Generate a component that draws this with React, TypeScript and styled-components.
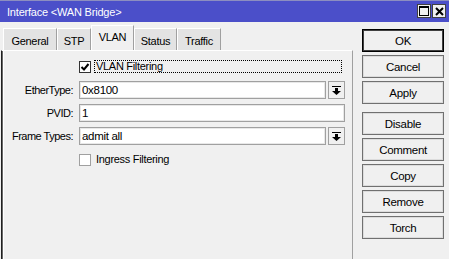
import React from "react";
import styled, { createGlobalStyle } from "styled-components";

const Global = createGlobalStyle`
  html, body { margin: 0; padding: 0; background: #f0f0f0; }
  body { font-family: "Liberation Sans", Arial, sans-serif; font-size: 11px; letter-spacing: -0.3px; color: #000; }
  * { box-sizing: border-box; }
`;

const Window = styled.div`
  width: 449px;
  height: 259px;
  overflow: hidden;
  background: #f0f0f0;
  display: flex;
  flex-direction: column;
`;

const TitleBar = styled.div`
  height: 22px;
  flex: none;
  background: #4b4fc9;
  border-top: 1px solid #8c8ec0;
  display: flex;
  align-items: center;
  padding: 0 3px 0 7px;
  color: #fff;
  font-size: 11px;
  letter-spacing: -0.2px;
`;

const TitleText = styled.span`
  flex: 1;
`;

const TitleControls = styled.div`
  display: flex;
  gap: 1px;
  margin-top: -1px;
`;

const TitleButton = styled.div`
  width: 14px;
  height: 14px;
  background: #f0f0f0;
  border: 1px solid #404040;
  display: flex;
  align-items: center;
  justify-content: center;
`;

const Body = styled.div`
  flex: 1;
  display: flex;
  min-height: 0;
`;

const LeftArea = styled.div`
  width: 353px;
  flex: none;
  padding: 3px 0 0 3px;
  display: flex;
  flex-direction: column;
`;

const TabRow = styled.div`
  display: flex;
  align-items: flex-end;
  height: 25px;
  flex: none;
`;

const Tab = styled.div<{ $w: number; $active?: boolean }>`
  width: ${(p) => p.$w}px;
  height: ${(p) => (p.$active ? 25 : 22)}px;
  background: ${(p) => (p.$active ? "#f0f0f0" : "#e3e3e3")};
  border-top: 1px solid #ffffff;
  border-left: 1px solid #ffffff;
  border-right: 1px solid #a0a0a0;
  display: flex;
  align-items: center;
  justify-content: center;
  padding-top: ${(p) => (p.$active ? 0 : 2)}px;
  padding-bottom: ${(p) => (p.$active ? 2 : 0)}px;
`;

const Panel = styled.div`
  flex: 1;
  margin-left: -2px;
  border-top: 1px solid #ffffff;
  border-left: 1px solid #202020;
  border-right: 1px solid #a0a0a0;
  box-shadow: inset 1px 0 0 #696969, inset 2px 0 0 #ffffff;
  padding: 9px 7px 0 2px;
  display: flex;
  flex-direction: column;
`;

const CheckRow = styled.div<{ $mt?: number }>`
  display: flex;
  align-items: center;
  height: 13px;
  margin-top: ${(p) => p.$mt ?? 0}px;
  padding-left: 75px;
`;

const Box = styled.div<{ $focus?: boolean }>`
  width: 12px;
  height: 12px;
  background: #fff;
  border: 1px solid ${(p) => (p.$focus ? "#333" : "#a0a0a0")};
  display: flex;
  align-items: center;
  justify-content: center;
  flex: none;
`;

const CheckLabel = styled.div<{ $focus?: boolean }>`
  margin-left: 3px;
  height: 13px;
  line-height: 11px;
  padding-left: 1px;
  flex: ${(p) => (p.$focus ? 1 : "none")};
  border: 1px dotted ${(p) => (p.$focus ? "#000" : "transparent")};
  margin-right: 3px;
`;

const Form = styled.div`
  display: grid;
  grid-template-columns: 69px 1fr;
  column-gap: 6px;
  row-gap: 5px;
  margin-top: 8px;
  align-items: center;
`;

const Label = styled.div`
  text-align: right;
  letter-spacing: -0.5px;
`;

const Field = styled.div`
  display: flex;
  gap: 2px;
  height: 18px;
`;

const Input = styled.div`
  flex: 1;
  height: 18px;
  background: #fff;
  border: 1px solid #a0a0a0;
  box-shadow: inset 0 0 0 1px #e8e8e8;
  padding: 0 2px;
  line-height: 16px;
  font-size: 11.5px;
`;

const DropButton = styled.div`
  width: 17px;
  height: 18px;
  flex: none;
  background: #f0f0f0;
  border: 1px solid #a0a0a0;
  display: flex;
  align-items: center;
  justify-content: center;
`;

const ButtonColumn = styled.div`
  width: 82px;
  margin-left: 9px;
  padding-top: 7px;
  display: flex;
  flex-direction: column;
  gap: 3px;
`;

const Button = styled.div<{ $default?: boolean; $mt?: number }>`
  height: 23px;
  background: #f0f0f0;
  border: 1px solid ${(p) => (p.$default ? "#000" : "#707070")};
  box-shadow: inset 0 0 0 1px ${(p) => (p.$default ? "#404040" : "#dcdcdc")};
  display: flex;
  align-items: center;
  justify-content: center;
  margin-top: ${(p) => p.$mt ?? 0}px;
  font-size: 11.5px;
`;

const DropIcon = () => (
  <svg width="9" height="9" viewBox="0 0 9 9">
    <rect x="0" y="0" width="9" height="1" fill="#000" />
    <rect x="3" y="2" width="3" height="3" fill="#000" />
    <polygon points="0,5 9,5 4.5,9" fill="#000" />
  </svg>
);

const Check = () => (
  <svg width="10" height="10" viewBox="0 0 10 10">
    <polyline points="1.5,5 4,7.5 8.5,2" fill="none" stroke="#000" strokeWidth="2" />
  </svg>
);

export default function App() {
  const tabs = [
    { name: "General", w: 54 },
    { name: "STP", w: 34 },
    { name: "VLAN", w: 43, active: true },
    { name: "Status", w: 43 },
    { name: "Traffic", w: 44 },
  ];
  return (
    <>
      <Global />
      <Window>
        <TitleBar>
          <TitleText>Interface &lt;WAN Bridge&gt;</TitleText>
          <TitleControls>
            <TitleButton>
              <svg width="10" height="10" viewBox="0 0 10 10">
                <rect x="0.5" y="0.5" width="9" height="9" fill="none" stroke="#000" />
                <rect x="0" y="0" width="10" height="2" fill="#000" />
              </svg>
            </TitleButton>
            <TitleButton>
              <svg width="9" height="9" viewBox="0 0 9 9">
                <path d="M1 1 L8 8 M8 1 L1 8" stroke="#000" strokeWidth="2" />
              </svg>
            </TitleButton>
          </TitleControls>
        </TitleBar>
        <Body>
          <LeftArea>
            <TabRow>
              {tabs.map((t) => (
                <Tab key={t.name} $w={t.w} $active={t.active}>
                  {t.name}
                </Tab>
              ))}
            </TabRow>
            <Panel>
              <CheckRow>
                <Box $focus>
                  <Check />
                </Box>
                <CheckLabel $focus>VLAN Filtering</CheckLabel>
              </CheckRow>
              <Form>
                <Label>EtherType:</Label>
                <Field>
                  <Input>0x8100</Input>
                  <DropButton>
                    <DropIcon />
                  </DropButton>
                </Field>
                <Label>PVID:</Label>
                <Field>
                  <Input>1</Input>
                </Field>
                <Label>Frame Types:</Label>
                <Field>
                  <Input>admit all</Input>
                  <DropButton>
                    <DropIcon />
                  </DropButton>
                </Field>
              </Form>
              <CheckRow $mt={8}>
                <Box />
                <CheckLabel>Ingress Filtering</CheckLabel>
              </CheckRow>
            </Panel>
          </LeftArea>
          <ButtonColumn>
            <Button $default>OK</Button>
            <Button>Cancel</Button>
            <Button>Apply</Button>
            <Button $mt={5}>Disable</Button>
            <Button>Comment</Button>
            <Button>Copy</Button>
            <Button>Remove</Button>
            <Button>Torch</Button>
          </ButtonColumn>
        </Body>
      </Window>
    </>
  );
}
